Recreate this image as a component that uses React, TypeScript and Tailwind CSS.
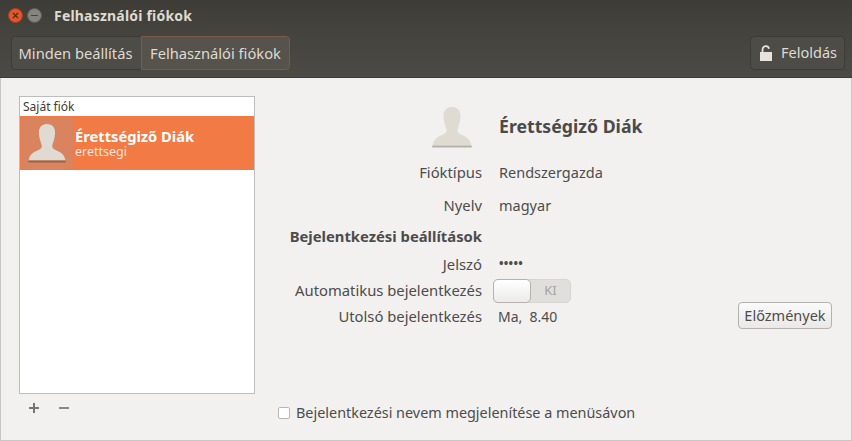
const font = "font-['Noto_Sans','Open_Sans',sans-serif]";

function Person({ className, base, shadow }: { className: string; base: string; shadow: string }) {
  return (
    <svg viewBox="0 0 40 42" className={className}>
      <path
        d="M20 1c-6 0-8.500 4-8.500 9 0 3 .5 6 1.500 9 .7 2.200 1.500 3.500 1.500 5.500 0 2-1.500 3-4 4.200C6 30.500 2 32.500 .5 39.500h39C38 32.500 34 30.500 29.500 28.700c-2.500-1.200-4-2.200-4-4.200 0-2 .8-3.300 1.500-5.500 1-3 1.500-6 1.500-9 0-5-2.500-9-8.500-9z"
        fill={base}
      />
      <rect x="0" y="39.500" width="40" height="2" rx="1" fill={shadow} />
    </svg>
  );
}

function Row({ label, children, className }: { label: string; children: React.ReactNode; className: string }) {
  return (
    <div className={`flex items-center ${className}`}>
      <div className="w-[227px] text-right text-[14.800px] shrink-0 whitespace-nowrap">{label}</div>
      <div className="ml-[17px] flex items-center">{children}</div>
    </div>
  );
}

export default function App() {
  return (
    <div className={`w-[852px] h-[441px] overflow-hidden flex flex-col bg-[#f2f1f0] text-[14.500px] text-[#4c4c4c] ${font}`}>
      {/* title bar */}
      <div className="h-[31px] flex items-center pl-[8px] bg-gradient-to-b from-[#3e3c37] to-[#45433d]">
        <div className="w-[15px] h-[15px] rounded-full bg-[#e2572c] border border-[#a83c1e] flex items-center justify-center">
          <svg viewBox="0 0 8 8" className="w-[7px] h-[7px]">
            <path d="M1 1l6 6M7 1l-6 6" stroke="#4a2416" strokeWidth="1.500" />
          </svg>
        </div>
        <div className="ml-[4px] w-[15px] h-[15px] rounded-full bg-[#85847f] border border-[#5c5b56] flex items-center justify-center">
          <div className="w-[7px] h-px bg-[#44433f]" />
        </div>
        <div className="ml-[12px] text-[14px] font-bold text-[#dfdbd2] leading-none tracking-[0.2px]">Felhasználói fiókok</div>
      </div>

      {/* toolbar */}
      <div className="h-[47px] flex items-center justify-between pl-[11px] pr-[7px] pb-[2px] bg-gradient-to-b from-[#45433d] to-[#4b4a44] border-b border-[#3c3b37]">
        <div className="flex h-[34px] rounded-[4px] border border-[#3c3b36] text-[14.700px] text-[#dfdbd2]">
          <div className="w-[129px] pr-[2px] flex items-center justify-center bg-[#4d4c46] rounded-l-[4px] whitespace-nowrap">Minden beállítás</div>
          <div className="w-[149px] flex items-center justify-center bg-[#55534c] rounded-r-[4px] border border-[#80584a] -my-px -mr-px whitespace-nowrap">Felhasználói fiókok</div>
        </div>
        <div className="w-[95px] h-[34px] flex items-center rounded-[4px] border border-[#3c3b36] bg-[#4d4c46] text-[#dfdbd2] pl-[9px]">
          <svg viewBox="0 0 12 16" className="w-[12px] h-[16px]">
            <path d="M2.500 7V4.500a3.300 3.300 0 0 1 6.500-.8" fill="none" stroke="#e6e3dc" strokeWidth="1.800" />
            <rect x="0" y="7" width="12" height="9" fill="#e6e3dc" />
          </svg>
          <span className="ml-[9px]">Feloldás</span>
        </div>
      </div>

      {/* content */}
      <div className="flex-1 flex border-x border-b border-[#c8c7c5] pl-[18px] pr-[19px] pt-[18px]">
        <div className="w-[236px] shrink-0">
          <div className="h-[298px] border border-[#bdbdbd] bg-white">
            <div className="h-[19px] pl-[3px] flex items-center text-[12px] text-[#3c3c3c]">Saját fiók</div>
            <div className="h-[54px] bg-[#f27a45] flex items-center text-white">
              <div className="ml-[1px] w-[52px] h-[52px] bg-[#d9835f] rounded-[3px] flex items-center justify-center">
                <Person className="w-[38px] h-[40px]" base="#dfdbd2" shadow="#9c6347" />
              </div>
              <div className="ml-[2px] -mt-[1px]">
                <div className="text-[14.700px] font-bold leading-[18px]">Érettségiző Diák</div>
                <div className="text-[12.500px] leading-[13px] text-[#fbe3d8]">erettsegi</div>
              </div>
            </div>
          </div>
          <div className="mt-[7px] pl-[8px] flex items-center gap-[16px]">
            <svg viewBox="0 0 14 14" className="w-[14px] h-[14px]">
              <path d="M7 2v10M2 7h10" stroke="#77766f" strokeWidth="2" />
            </svg>
            <svg viewBox="0 0 14 14" className="w-[14px] h-[14px]">
              <path d="M2 7h10" stroke="#8a8983" strokeWidth="2" />
            </svg>
          </div>
        </div>

        <div className="flex-1 relative flex flex-col">
          <Row label="" className="h-[60px]">
            <div className="-ml-[67px] mr-[27px] mt-[1px]">
              <Person className="w-[40px] h-[42px]" base="#dfdbd2" shadow="#b4b1a9" />
            </div>
            <span className="text-[17.700px] font-bold text-[#4a4a4a] whitespace-nowrap">Érettségiző Diák</span>
          </Row>
          <Row label="Fióktípus" className="h-[33px]">Rendszergazda</Row>
          <Row label="Nyelv" className="h-[33px]">magyar</Row>
          <Row label="Bejelentkezési beállítások" className="h-[29px] font-bold"> </Row>
          <Row label="Jelszó" className="h-[26px]">
            <span className="tracking-[0.3px] text-[12px] font-bold">•••••</span>
          </Row>
          <Row label="Automatikus bejelentkezés" className="h-[27px]">
            <div className="-ml-[6px] w-[78px] h-[24px] rounded-[5px] border border-[#d6d5d2] bg-[#e0dfdc] flex items-center">
              <div className="w-[38px] h-[24px] -ml-px rounded-[5px] border border-[#b4b3af] bg-gradient-to-b from-white to-[#ecebe9]" />
              <span className="flex-1 text-center text-[13px] text-[#a5a49f]">KI</span>
            </div>
          </Row>
          <Row label="Utolsó bejelentkezés" className="h-[25px]">
            <span className="-ml-px text-[14px] whitespace-pre">Ma,  8.40</span>
          </Row>
          <div className="absolute right-0 top-[206px] w-[94px] h-[27px] rounded-[4px] border border-[#b3b2ae] bg-gradient-to-b from-[#fbfafa] to-[#eae9e7] flex items-center justify-center text-[#4c4c4c]">
            Előzmények
          </div>
          <div className="mt-[73px] ml-[23px] flex items-center">
            <div className="w-[12px] h-[12px] rounded-[2px] border border-[#b8b7b3] bg-white" />
            <span className="ml-[6px] text-[14.400px] whitespace-nowrap">Bejelentkezési nevem megjelenítése a menüsávon</span>
          </div>
        </div>
      </div>
    </div>
  );
}
